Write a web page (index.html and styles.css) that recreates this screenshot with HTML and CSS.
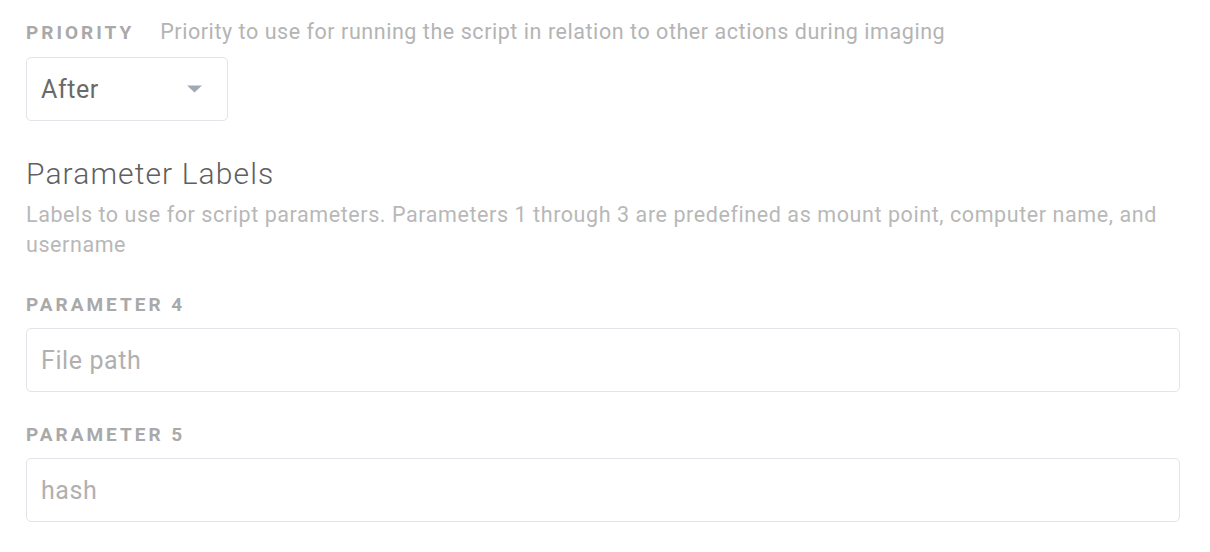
FILE: index.html
```html
<!DOCTYPE html>
<html>
<head>
<meta charset="utf-8">
<link rel="stylesheet" href="styles.css">
</head>
<body>
<div class="form">
  <div class="field-head">
    <span class="label">PRIORITY</span>
    <span class="hint">Priority to use for running the script in relation to other actions during imaging</span>
  </div>
  <div class="select">
    <span class="select-value">After</span>
    <svg class="caret" width="15" height="8" viewBox="0 0 15 8"><path d="M0 0.5H15L7.5 7.5Z" fill="#a3a8b5"/></svg>
  </div>

  <h2 class="section-title">Parameter Labels</h2>
  <p class="section-desc">Labels to use for script parameters. Parameters 1 through 3 are predefined as mount point, computer name, and username</p>

  <div class="label block first">PARAMETER 4</div>
  <div class="input"><span class="placeholder">File path</span></div>

  <div class="label block">PARAMETER 5</div>
  <div class="input"><span class="placeholder">hash</span></div>
</div>
</body>
</html>
```

FILE: styles.css
```css
html, body {
  margin: 0;
  padding: 0;
  background: #fff;
}
body {
  font-family: Roboto, "Liberation Sans", sans-serif;
}
.form {
  width: 1154px;
  padding: 20px 0 0 26px;
  display: flex;
  flex-direction: column;
  align-items: flex-start;
}
.field-head {
  display: flex;
  align-items: baseline;
  gap: 26px;
  height: 24px;
  line-height: 24px;
}
.label {
  font-size: 19px;
  font-weight: 700;
  letter-spacing: 3px;
  color: #a9a9a9;
  line-height: 24px;
}
.hint {
  font-size: 21.5px;
  letter-spacing: 0.55px;
  color: #b4b4b4;
}
.select {
  margin-top: 13px;
  box-sizing: border-box;
  width: 202px;
  height: 64px;
  border: 1.5px solid #e3e3e9;
  border-radius: 5px;
  display: flex;
  align-items: center;
  justify-content: space-between;
  padding: 0 25px 0 14px;
}
.select-value {
  font-size: 25px;
  letter-spacing: 0.6px;
  color: #6a6a6a;
}
.caret {
  display: block;
}
.section-title {
  margin: 35px 0 0 0;
  font-size: 30px;
  font-weight: 300;
  letter-spacing: 1.1px;
  color: #5f5f5f;
  line-height: 36px;
}
.section-desc {
  margin: 8px 0 0 0;
  font-size: 21.5px;
  letter-spacing: 0.58px;
  line-height: 30px;
  color: #b8b8b8;
}
.label.block {
  margin-top: 31px;
}
.label.block.first {
  margin-top: 33px;
}
.input {
  margin-top: 11px;
  box-sizing: border-box;
  width: 1154px;
  height: 64px;
  border: 1.5px solid #e3e3e9;
  border-radius: 5px;
  display: flex;
  align-items: center;
  padding: 0 14px;
}
.placeholder {
  font-size: 25px;
  letter-spacing: 0.6px;
  color: #b0b0b0;
}
```
